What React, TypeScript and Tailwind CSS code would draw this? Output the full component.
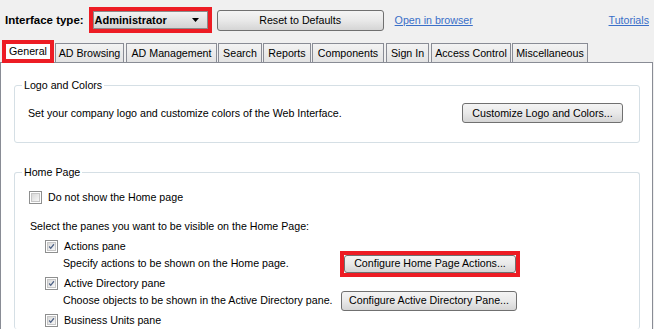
import type { ReactNode } from 'react';

type Tab = { label: string; width: string; ml: string };

const tabs: Tab[] = [
  { label: 'AD Browsing', width: 'w-[69px]', ml: 'ml-[1px]' },
  { label: 'AD Management', width: 'w-[91px]', ml: 'ml-[2px]' },
  { label: 'Search', width: 'w-[44px]', ml: 'ml-[1px]' },
  { label: 'Reports', width: 'w-[48px]', ml: 'ml-[1px]' },
  { label: 'Components', width: 'w-[72px]', ml: 'ml-[1px]' },
  { label: 'Sign In', width: 'w-[43px]', ml: 'ml-[2px]' },
  { label: 'Access Control', width: 'w-[80px]', ml: 'ml-[2px]' },
  { label: 'Miscellaneous', width: 'w-[76px]', ml: 'ml-[1px]' },
];

// Win7-ish push button
function WinButton({ children, className = '' }: { children: ReactNode; className?: string }) {
  return (
    <button
      className={`flex shrink-0 items-center justify-center rounded-[3px] border border-[#707070] bg-linear-to-b from-[#f4f4f4] via-[#e9e9e9] to-[#d5d5d5] text-black ${className}`}
    >
      {children}
    </button>
  );
}

// red annotation box drawn over the control, not taking space
function Marked({ children }: { children: ReactNode }) {
  return <span className="-m-[4px] flex shrink-0 border-4 border-[#ed1c24]">{children}</span>;
}

function CheckBox({ checked = false }: { checked?: boolean }) {
  return (
    <span className="flex h-[13px] w-[13px] shrink-0 items-center justify-center border border-[#8e8f8f] bg-white">
      <span className="flex h-[9px] w-[9px] items-center justify-center border border-[#c6c6c6] bg-linear-to-br from-[#d9d9d9] to-[#f7f7f7]">
        {checked && (
          <svg width="9" height="9" viewBox="0 0 9 9">
            <path d="M1.5 4.5 L3.5 6.8 L7.6 1.6" fill="none" stroke="#4d6185" strokeWidth="1.6" />
          </svg>
        )}
      </span>
    </span>
  );
}

function PaneItem({
  label,
  desc,
  descWidth,
  button,
  highlight = false,
}: {
  label: string;
  desc?: string;
  descWidth?: string;
  button?: string;
  highlight?: boolean;
}) {
  return (
    <div className="flex flex-col pl-[30px]">
      <div className="flex h-[17px] items-center gap-[6px]">
        <CheckBox checked />
        <span>{label}</span>
      </div>
      {desc && (
        <div className="mb-[3px] flex h-[17px] items-center pl-[18px]">
          <span className={`shrink-0 whitespace-nowrap ${descWidth}`}>{desc}</span>
          {highlight ? (
            <Marked>
              <WinButton className="h-[18px] w-[172px]">{button}</WinButton>
            </Marked>
          ) : (
            <WinButton className="h-[20px] w-[176px]">{button}</WinButton>
          )}
        </div>
      )}
    </div>
  );
}

export default function App() {
  return (
    <div className="flex h-[329px] w-[654px] flex-col overflow-hidden bg-[#f0f0f0] font-['Liberation_Sans',Arial,sans-serif] text-[10.67px] leading-[13px] text-black">
      {/* top toolbar */}
      <div className="flex h-[40px] shrink-0 items-center pl-[5px] pr-[5px]">
        <span className="text-[11.5px] font-bold">Interface type:</span>
        <span className="ml-[9px]">
          <Marked>
            <div className="flex h-[18px] w-[115px] items-center justify-between border border-[#8a8a8a] bg-linear-to-b from-[#f2f2f2] to-[#d3d3d3] pl-[1px] pr-[8px]">
              <span className="text-[11px] font-bold">Administrator</span>
              <svg width="7" height="4" viewBox="0 0 7 4">
                <path d="M0 0 H7 L3.5 4 Z" fill="#000" />
              </svg>
            </div>
          </Marked>
        </span>
        <WinButton className="ml-[9px] h-[21px] w-[167px]">Reset to Defaults</WinButton>
        <a className="ml-[11px] text-[#3a6fc8] underline">Open in browser</a>
        <a className="ml-auto text-[#3a6fc8] underline">Tutorials</a>
      </div>

      {/* tab strip */}
      <div className="relative z-10 flex h-[22px] shrink-0 items-end">
        <div className="-mb-[1px] ml-[2px] flex h-[23px] w-[52px] items-center justify-center border-4 border-[#ed1c24] bg-white pb-[1px]">
          General
        </div>
        {tabs.map((t) => (
          <div
            key={t.label}
            className={`flex h-[19px] items-center justify-center border border-b-0 border-[#898c95] bg-linear-to-b from-[#f3f3f3] to-[#e3e3e3] ${t.width} ${t.ml}`}
          >
            {t.label}
          </div>
        ))}
      </div>

      {/* tab page */}
      <div className="flex w-[653px] flex-1 flex-col border border-b-0 border-[#898c95] bg-white">
        <fieldset className="ml-[13px] mt-[16px] w-[626px] rounded-[3px] border border-[#d5dfe5]">
          <legend className="ml-[7px] px-[2px]">Logo and Colors</legend>
          <div className="mb-[19px] mt-[11px] flex h-[20px] items-center justify-between pl-[13px] pr-[16px]">
            <span>Set your company logo and customize colors of the Web Interface.</span>
            <WinButton className="h-[20px] w-[161px]">Customize Logo and Colors...</WinButton>
          </div>
        </fieldset>

        <fieldset className="ml-[13px] mt-[23px] w-[626px] rounded-[3px] border border-b-0 border-[#d5dfe5]">
          <legend className="ml-[7px] px-[2px]">Home Page</legend>
          <div className="mt-[10px] flex h-[17px] items-center gap-[6px] pl-[14px]">
            <CheckBox />
            <span>Do not show the Home page</span>
          </div>
          <div className="mt-[12px] flex h-[17px] items-center pl-[15px]">
            Select the panes you want to be visible on the Home Page:
          </div>
          <div className="mt-[3px] flex flex-col">
            <PaneItem
              label="Actions pane"
              desc="Specify actions to be shown on the Home page."
              descWidth="w-[281px]"
              button="Configure Home Page Actions..."
              highlight
            />
            <PaneItem
              label="Active Directory pane"
              desc="Choose objects to be shown in the Active Directory pane."
              descWidth="w-[278px]"
              button="Configure Active Directory Pane..."
            />
            <PaneItem label="Business Units pane" />
          </div>
        </fieldset>
      </div>
    </div>
  );
}
